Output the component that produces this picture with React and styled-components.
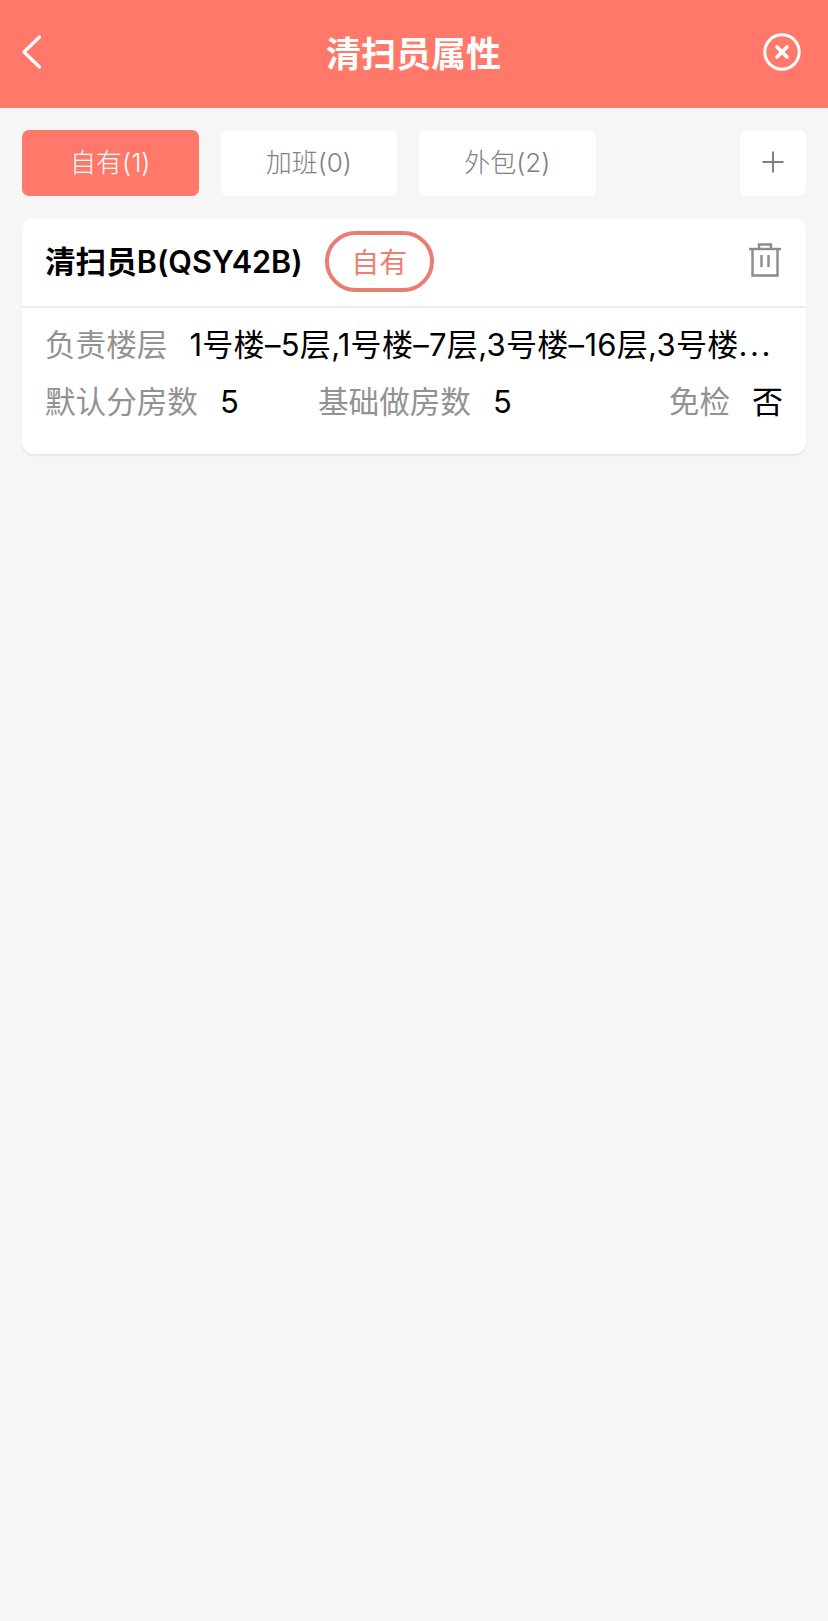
import React from "react";
import styled, { createGlobalStyle } from "styled-components";

const FONT = `Inter, "Noto Sans CJK SC", sans-serif`;

const Global = createGlobalStyle`
  html, body { margin: 0; padding: 0; background: #f6f6f6; }
  body { font-family: ${FONT}; font-feature-settings: "calt" 0; }
  * { box-sizing: border-box; }
`;

const Page = styled.div`
  width: 828px;
  height: 1621px;
  background: #f6f6f6;
  overflow: hidden;
`;

const Header = styled.header`
  height: 108px;
  background: #ff7869;
  display: flex;
  align-items: center;
  justify-content: space-between;
  padding: 0 27px 4px 20px;
`;

const IconSlot = styled.div`
  width: 40px;
  height: 40px;
  display: flex;
  align-items: center;
  justify-content: ${(p) => (p.$end ? "flex-end" : "flex-start")};
`;

const Title = styled.h1`
  margin: 4px 0 0 6px;
  color: #fff;
  font-size: 35px;
  font-weight: 600;
  line-height: 40px;
`;

const TabBar = styled.nav`
  display: flex;
  gap: 22px;
  padding: 22px 22px 0;
`;

const Tab = styled.div`
  width: 176.5px;
  height: 66px;
  border-radius: 7px;
  display: flex;
  align-items: center;
  justify-content: center;
  padding-bottom: 5px;
  font-size: 26px;
  font-weight: 300;
  color: ${(p) => (p.$active ? "#fff" : "#808080")};
  background: ${(p) => (p.$active ? "#ff7869" : "#fff")};
`;

const AddTab = styled.div`
  margin-left: auto;
  width: 66px;
  height: 66px;
  border-radius: 7px;
  background: #fff;
  display: flex;
  align-items: center;
  justify-content: center;
  padding-bottom: 2px;
`;

const Card = styled.section`
  margin: 22px 22px 0;
  height: 236px;
  background: #fff;
  border-radius: 12px;
  box-shadow: 0 2px 2px rgba(0, 0, 0, 0.07);
`;

const CardHead = styled.div`
  height: 90px;
  border-bottom: 2px solid #ececec;
  display: flex;
  align-items: center;
  padding: 0 25px 0 23px;
`;

const Name = styled.div`
  font-size: 30.6px;
  font-weight: 600;
  color: #000;
  white-space: nowrap;
  margin-bottom: 5px;
`;

const Badge = styled.div`
  margin: 0 0 2px 22px;
  flex: none;
  width: 109px;
  height: 61px;
  border: 4px solid #ea7c72;
  border-radius: 31px;
  color: #ee7f75;
  font-size: 28px;
  display: flex;
  align-items: center;
  justify-content: center;
`;

const Trash = styled.div`
  margin-left: auto;
  display: flex;
  margin-bottom: 4px;
`;

const CardBody = styled.div`
  padding: 17px 23px 0;
  display: flex;
  flex-direction: column;
  gap: 17px;
`;

const Row = styled.div`
  display: flex;
  align-items: center;
  height: 40px;
  font-size: 30.6px;
  line-height: 40px;
  white-space: nowrap;
`;

const Label = styled.span`
  color: #929292;
  flex: none;
`;

const Value = styled.span`
  color: #000;
  margin-left: 22px;
  min-width: 0;
  font-size: 31px;
  letter-spacing: ${(p) => (p.$spaced ? "0.3px" : "0")};
`;

const Dots = styled.span`
  letter-spacing: 2.5px;
`;

const Field = styled.div`
  display: flex;
  align-items: center;
  width: ${(p) => p.$w || "auto"};
  margin-left: ${(p) => (p.$end ? "auto" : "0")};
`;

export default function App() {
  return (
    <Page>
      <Global />
      <Header>
        <IconSlot>
          <svg width="24" height="36" viewBox="0 0 24 36" fill="none">
            <path d="M19.5 3 L4 18 L19.5 33" stroke="#fff" strokeWidth="3.2" strokeLinecap="round" strokeLinejoin="round" />
          </svg>
        </IconSlot>
        <Title>清扫员属性</Title>
        <IconSlot $end>
          <svg width="38" height="38" viewBox="0 0 38 38" fill="none">
            <circle cx="19" cy="19" r="17.2" stroke="#fff" strokeWidth="3" />
            <path d="M14 14 L24 24 M24 14 L14 24" stroke="#fff" strokeWidth="3.6" strokeLinecap="round" />
          </svg>
        </IconSlot>
      </Header>
      <TabBar>
        <Tab $active>自有(1)</Tab>
        <Tab>加班(0)</Tab>
        <Tab>外包(2)</Tab>
        <AddTab>
          <svg width="22" height="22" viewBox="0 0 22 22" fill="none">
            <path d="M0.5 11 H21.5 M11 0.5 V21.5" stroke="#808080" strokeWidth="2" />
          </svg>
        </AddTab>
      </TabBar>
      <Card>
        <CardHead>
          <Name>清扫员B(QSY42B)</Name>
          <Badge>自有</Badge>
          <Trash>
            <svg width="32" height="34" viewBox="0 0 32 34" fill="none" stroke="#8c8c8c" strokeWidth="2.4">
              <path d="M0 6 H32" />
              <path d="M10 6 V1.5 H22 V6" />
              <path d="M3.5 6 V32.5 H28.5 V6" />
              <path d="M12.5 12 V24 M19.5 12 V24" />
            </svg>
          </Trash>
        </CardHead>
        <CardBody>
          <Row>
            <Label>负责楼层</Label>
            <Value $spaced>1号楼–5层,1号楼–7层,3号楼–16层,3号楼<Dots>...</Dots></Value>
          </Row>
          <Row>
            <Field $w="273px">
              <Label>默认分房数</Label>
              <Value>5</Value>
            </Field>
            <Field>
              <Label>基础做房数</Label>
              <Value>5</Value>
            </Field>
            <Field $end>
              <Label>免检</Label>
              <Value>否</Value>
            </Field>
          </Row>
        </CardBody>
      </Card>
    </Page>
  );
}
